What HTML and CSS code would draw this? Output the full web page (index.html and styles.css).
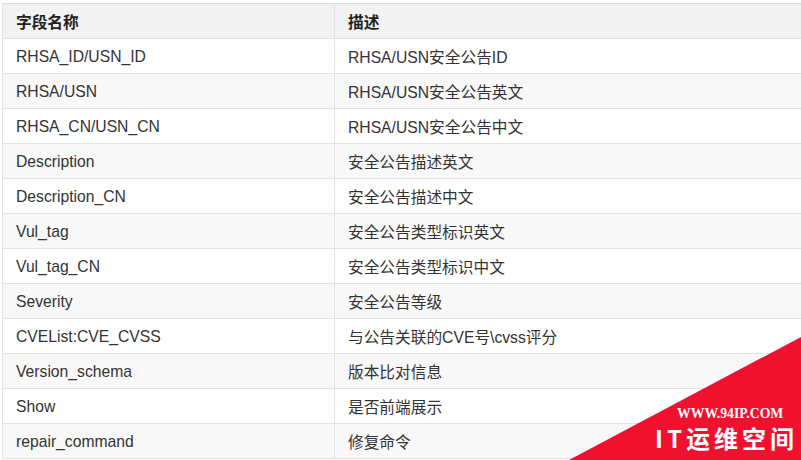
FILE: index.html
```html
<!DOCTYPE html>
<html lang="zh">
<head>
<meta charset="utf-8">
<link rel="stylesheet" href="styles.css">
</head>
<body>
<div class="page">
  <table class="fields">
    <thead>
      <tr><th class="c1">字段名称</th><th class="c2">描述</th></tr>
    </thead>
    <tbody>
      <tr><td>RHSA_ID/USN_ID</td><td>RHSA/USN安全公告ID</td></tr>
      <tr><td>RHSA/USN</td><td>RHSA/USN安全公告英文</td></tr>
      <tr><td>RHSA_CN/USN_CN</td><td>RHSA/USN安全公告中文</td></tr>
      <tr><td>Description</td><td>安全公告描述英文</td></tr>
      <tr><td>Description_CN</td><td>安全公告描述中文</td></tr>
      <tr><td>Vul_tag</td><td>安全公告类型标识英文</td></tr>
      <tr><td>Vul_tag_CN</td><td>安全公告类型标识中文</td></tr>
      <tr><td>Severity</td><td>安全公告等级</td></tr>
      <tr><td>CVEList:CVE_CVSS</td><td>与公告关联的CVE号\cvss评分</td></tr>
      <tr><td>Version_schema</td><td>版本比对信息</td></tr>
      <tr><td>Show</td><td>是否前端展示</td></tr>
      <tr><td>repair_command</td><td>修复命令</td></tr>
    </tbody>
  </table>
  <div class="badge">
    <svg class="tri" width="232" height="123" viewBox="0 0 232 123"><polygon points="0,123 232,0 232,123" fill="#f0112f"/></svg>
    <div class="url">WWW.94IP.COM</div>
    <div class="brand">IT运维空间</div>
  </div>
</div>
</body>
</html>
```
FILE: styles.css
```css
html, body { margin: 0; padding: 0; background: #fff; }
.page {
  width: 801px;
  height: 460px;
  overflow: hidden;
  position: relative;
  padding: 3px 0 0 2px;
  box-sizing: border-box;
}
.fields {
  border-collapse: collapse;
  width: 1000px;
  font-family: "Liberation Sans", "Noto Sans CJK SC", sans-serif;
  font-size: 15.7px;
  color: #333;
  table-layout: fixed;
}
.fields th, .fields td {
  border: 1px solid #e2e2e2;
  height: 35px;
  padding: 1px 0 0 13px;
  text-align: left;
  vertical-align: middle;
  box-sizing: border-box;
}
.fields th {
  background: #f2f2f2;
  font-weight: bold;
  color: #222;
  border-top-color: #dcdcdc;
}
.c1 { width: 332px; }
.fields tbody tr:nth-child(even) td { background: #f8f8f8; }
.badge {
  position: absolute;
  right: 0;
  bottom: 0;
  width: 232px;
  height: 123px;
}
.tri { position: absolute; left: 0; top: 0; display: block; }
.url {
  position: absolute;
  left: 108px;
  top: 70px;
  font-family: "Liberation Serif", serif;
  font-weight: bold;
  font-size: 13.7px;
  line-height: 13px;
  color: #fff;
  white-space: nowrap;
}
.brand {
  position: absolute;
  left: 86px;
  top: 89px;
  font-family: "Noto Sans CJK SC", sans-serif;
  font-weight: bold;
  font-size: 24px;
  line-height: 24px;
  letter-spacing: 4px;
  color: #fff;
  white-space: nowrap;
}
```
